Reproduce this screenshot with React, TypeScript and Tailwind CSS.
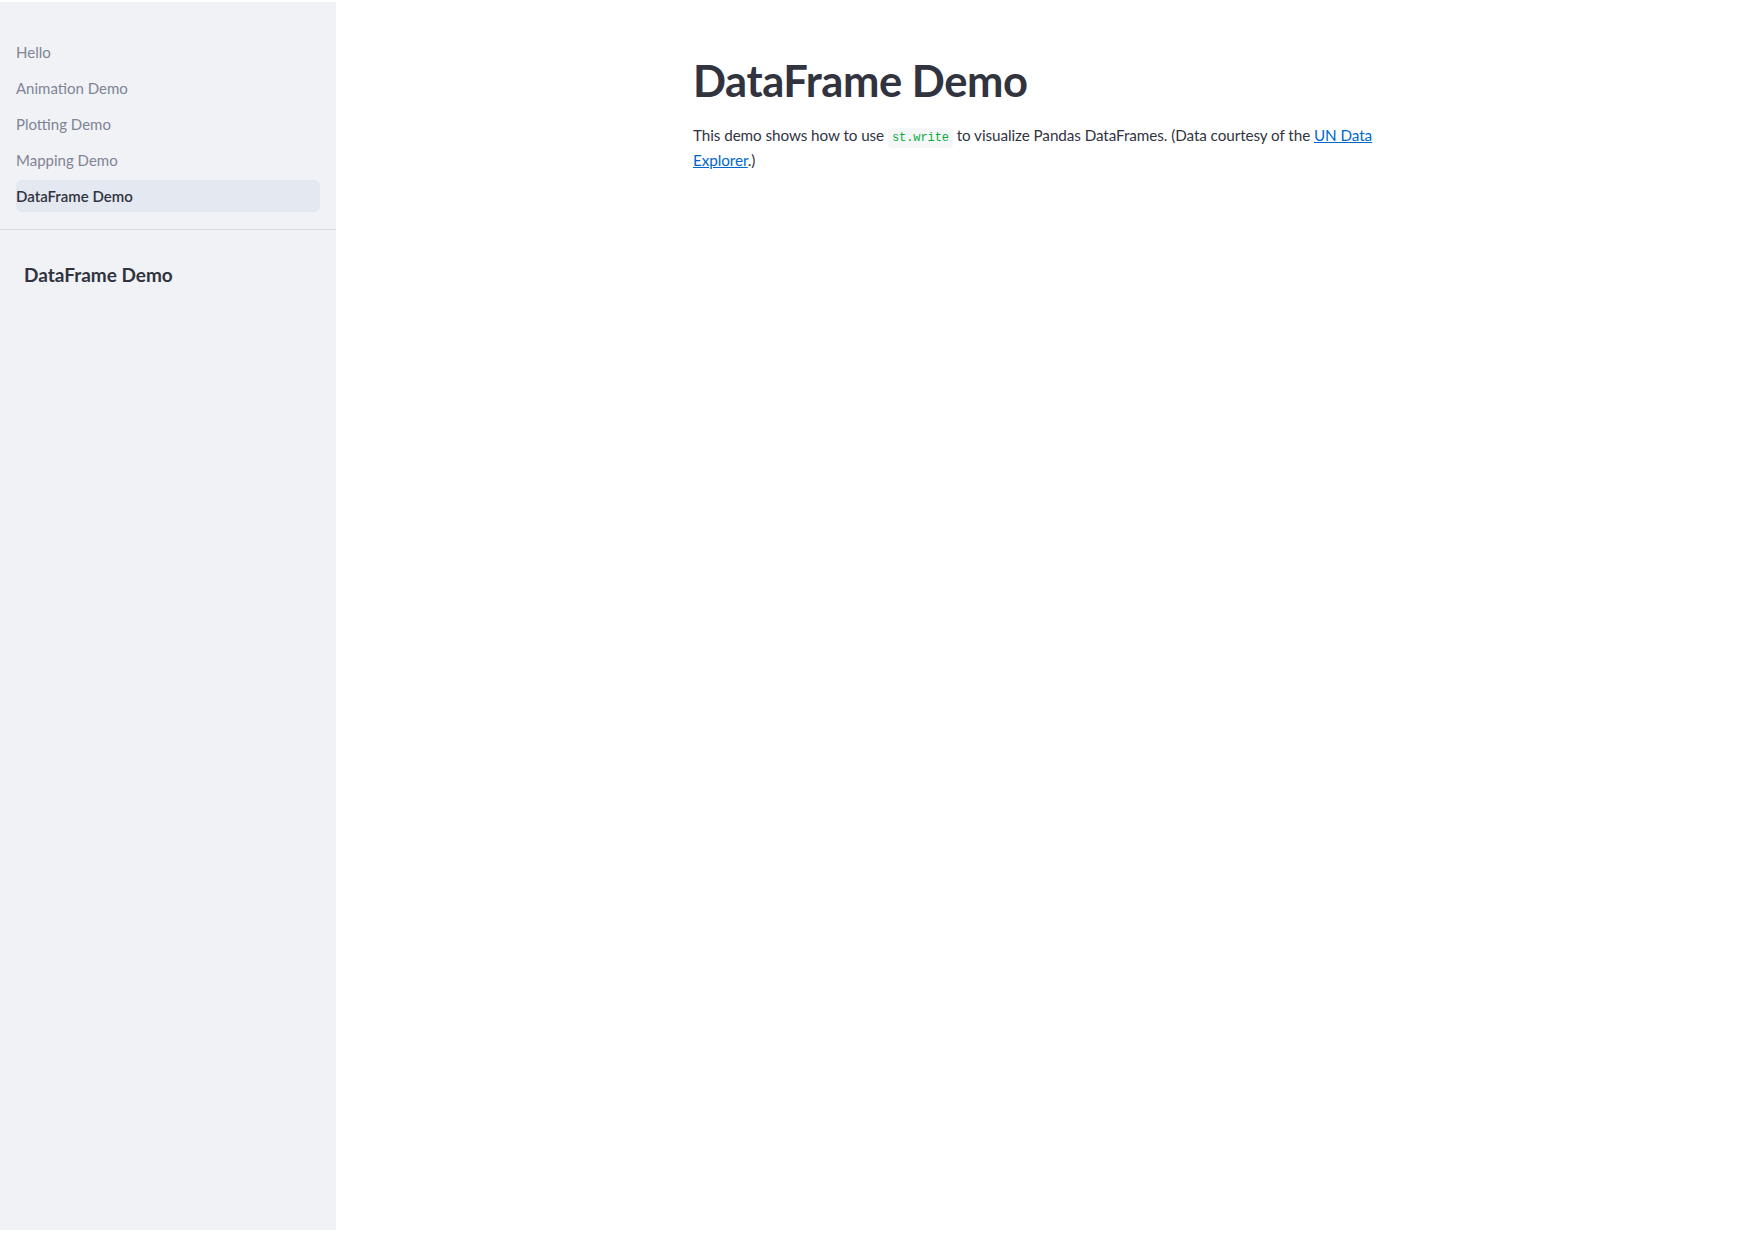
import React from 'react';

const navItems = ['Hello', 'Animation Demo', 'Plotting Demo', 'Mapping Demo', 'DataFrame Demo'];

export default function App() {
  const active = 'DataFrame Demo';

  return (
    <div
      className="flex min-h-[1240px] bg-white text-[#31333F]"
      style={{ fontFamily: 'Lato, "Noto Sans", sans-serif' }}
    >
      {/* Sidebar */}
      <aside className="mt-[2px] h-[1228px] w-[336px] shrink-0 bg-[#F0F2F6]">
        <nav className="flex flex-col gap-[4px] px-4 pt-[34px] pb-[17px]">
          {navItems.map((item) => (
            <div
              key={item}
              className={`flex h-[32px] items-center rounded-md text-[15px] ${
                item === active ? 'bg-[#E4E8F0] font-semibold text-[#31333F]' : 'text-[#808495]'
              }`}
            >
              {item}
            </div>
          ))}
        </nav>
        <div className="border-t border-[#D5D8DE]" />
        <div className="px-6 pt-[31px]">
          <h2 className="text-[19px] font-bold leading-[28px] text-[#31333F]">DataFrame Demo</h2>
        </div>
      </aside>

      {/* Main */}
      <main className="flex flex-1 justify-center">
        <div className="w-[736px] px-4 pt-[52px]">
          <h1 className="text-[43.5px] font-bold leading-[56px] tracking-[-0.01em]">DataFrame Demo</h1>
          <p className="mt-[15px] text-[15.25px] leading-[25px] tracking-[-0.005em]">
            This demo shows how to use{' '}
            <code
              className="rounded-[4px] bg-[#F6F7F9] px-[4px] py-[3px] text-[12px] leading-none text-[#09AB3B]"
              style={{ fontFamily: '"Liberation Mono", "DejaVu Sans Mono", monospace' }}
            >
              st.write
            </code>{' '}
            to visualize Pandas DataFrames. (Data courtesy of the{' '}
            <a href="#" className="text-[#0068C9] underline">
              UN Data Explorer
            </a>
            .)
          </p>
        </div>
      </main>
    </div>
  );
}
